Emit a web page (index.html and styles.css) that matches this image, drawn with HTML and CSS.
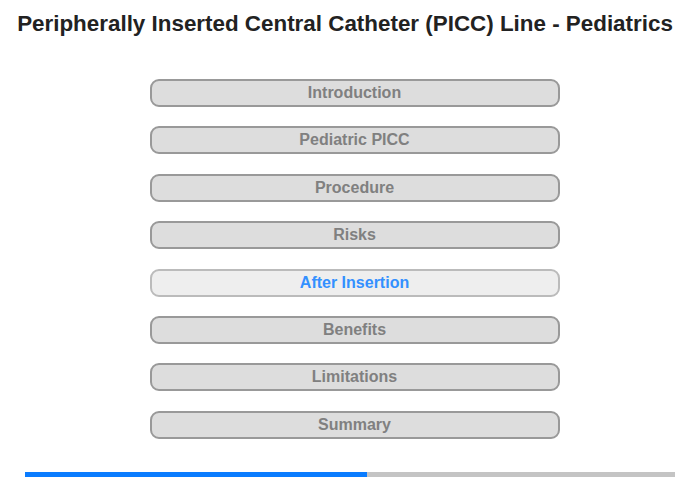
FILE: index.html
```html
<!DOCTYPE html>
<html lang="en">
<head>
    <meta charset="UTF-8">
    <title>PICC Line - Pediatrics</title>
    <link rel="stylesheet" href="styles.css">
</head>
<body>
    <h1 class="title">Peripherally Inserted Central Catheter (PICC) Line - Pediatrics</h1>

    <div class="menu">
        <button class="menu-btn">Introduction</button>
        <button class="menu-btn">Pediatric PICC</button>
        <button class="menu-btn">Procedure</button>
        <button class="menu-btn">Risks</button>
        <button class="menu-btn active">After Insertion</button>
        <button class="menu-btn">Benefits</button>
        <button class="menu-btn">Limitations</button>
        <button class="menu-btn">Summary</button>
    </div>

    <div class="progress">
        <div class="progress-fill" style="width: 52.6%"></div>
    </div>
</body>
</html>
```
FILE: styles.css
```css
body {
    margin: 0;
    font-family: "Liberation Sans", Arial, sans-serif;
    background-color: #fff;
}

.title {
    margin: 0;
    padding: 11px 10px 0 0;
    height: 79px;
    box-sizing: border-box;
    text-align: center;
    font-size: 22.4px;
    font-weight: bold;
    color: #222;
}

.menu {
    display: flex;
    flex-direction: column;
    align-items: center;
    gap: 19.4px;
    padding-left: 9px;
}

.menu-btn {
    width: 410px;
    height: 28px;
    padding: 0;
    border: 2px solid #999;
    border-radius: 9px;
    background-color: #ddd;
    color: #808080;
    font-family: "Liberation Sans", Arial, sans-serif;
    font-size: 16px;
    font-weight: bold;
    cursor: pointer;
}

.menu-btn.active {
    background-color: #eee;
    border-color: #bbb;
    color: #3390ff;
}

.progress {
    margin: 33px 25px 0;
    height: 5px;
    background-color: #c4c4c4;
}

.progress-fill {
    height: 100%;
    background-color: #0a7cff;
}
```
